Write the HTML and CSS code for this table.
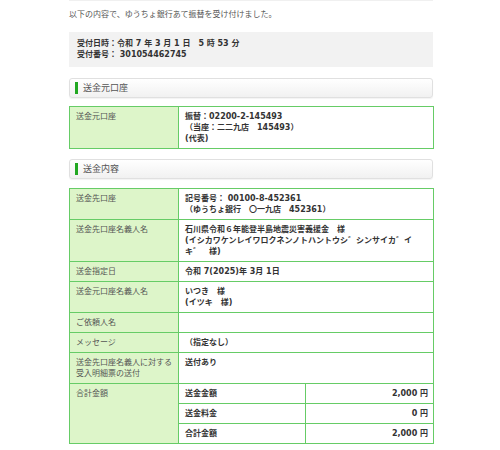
FILE: index.html
```html
<!DOCTYPE html>
<html lang="ja">
<head>
<meta charset="utf-8">
<title>受付完了</title>
<link rel="stylesheet" href="styles.css">
</head>
<body>
<div class="page">
  <p class="lead">以下の内容で、ゆうちょ銀行あて振替を受け付けました。</p>
  <div class="receipt">
    <div>受付日時：令和 7 年 3 月 1 日　5 時 53 分</div>
    <div>受付番号： 301054462745</div>
  </div>

  <h2 class="sec">送金元口座</h2>
  <table class="info">
    <colgroup><col class="c-label"><col class="c-sub"><col class="c-amt"></colgroup>
    <tr>
      <th>送金元口座</th>
      <td colspan="2">振替：02200-2-145493<br>（当座：二二九店　145493）<br>(代表)</td>
    </tr>
  </table>

  <h2 class="sec sec-2">送金内容</h2>
  <table class="info">
    <colgroup><col class="c-label"><col class="c-sub"><col class="c-amt"></colgroup>
    <tr>
      <th>送金先口座</th>
      <td colspan="2">記号番号： 00100-8-452361<br>（ゆうちょ銀行　〇一九店　452361）</td>
    </tr>
    <tr>
      <th>送金先口座名義人名</th>
      <td colspan="2">石川県令和６年能登半島地震災害義援金　様<br>(イシカワケンレイワロクネンノトハントウシ゛シンサイカ゛イキ゛　様)</td>
    </tr>
    <tr>
      <th>送金指定日</th>
      <td colspan="2">令和 7(2025)年 3月 1日</td>
    </tr>
    <tr>
      <th>送金元口座名義人名</th>
      <td colspan="2">いつき　様<br>(イツキ　様)</td>
    </tr>
    <tr>
      <th>ご依頼人名</th>
      <td colspan="2"></td>
    </tr>
    <tr>
      <th>メッセージ</th>
      <td colspan="2">（指定なし）</td>
    </tr>
    <tr>
      <th>送金先口座名義人に対する受入明細票の送付</th>
      <td colspan="2">送付あり</td>
    </tr>
    <tr>
      <th rowspan="3">合計金額</th>
      <td>送金金額</td>
      <td class="amt">2,000 円</td>
    </tr>
    <tr>
      <td>送金料金</td>
      <td class="amt">0 円</td>
    </tr>
    <tr>
      <td>合計金額</td>
      <td class="amt">2,000 円</td>
    </tr>
  </table>
</div>
</body>
</html>
```

FILE: styles.css
```css
* {
  box-sizing: border-box;
}

body {
  margin: 0;
  background: #fff;
  font-family: "DejaVu Sans", "Noto Sans CJK JP", sans-serif;
  font-size: 8px;
  line-height: 11px;
  color: #333;
}

.page {
  width: 364px;
  margin-left: 69px;
  border-top: 1px solid #f0f0f0;
}

.lead {
  margin: 0;
  padding-top: 8px;
  color: #555;
}

.receipt {
  margin-top: 12px;
  padding: 6px 8px 7px;
  background: #f2f2f2;
  font-weight: bold;
  color: #333;
}

.sec {
  display: flex;
  align-items: center;
  height: 20px;
  margin: 11px 0 8px;
  padding-left: 5px;
  border: 1px solid #e0e0e0;
  border-radius: 3px;
  background: linear-gradient(#ffffff, #f1f1f1);
  box-shadow: 0 1px 1px rgba(0, 0, 0, 0.05);
  font-size: 9px;
  font-weight: normal;
  color: #555;
}

.sec::before {
  content: "";
  width: 3px;
  height: 12px;
  margin-right: 5px;
  background: #22a822;
}

.sec-2 {
  margin-top: 10px;
  margin-bottom: 9px;
}

.info {
  width: 364px;
  border-collapse: collapse;
  table-layout: fixed;
}

.c-label {
  width: 109px;
}

.c-sub {
  width: 127px;
}

.c-amt {
  width: 128px;
}

.info th,
.info td {
  border: 1px solid #66cc66;
  padding: 4px 6px;
  vertical-align: top;
  text-align: left;
}

.info th {
  background: #ddf5c9;
  font-weight: normal;
  color: #555;
}

.info td {
  background: #fff;
  font-weight: bold;
  color: #333;
}

.info td.amt {
  text-align: right;
  padding-right: 5px;
}
```
